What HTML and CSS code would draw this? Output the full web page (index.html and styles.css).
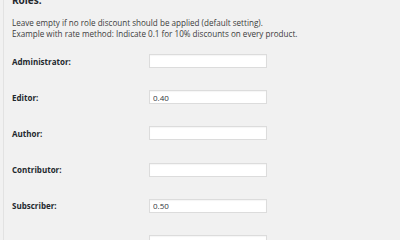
FILE: index.html
```html
<!DOCTYPE html>
<html lang="en">
<head>
    <meta charset="UTF-8">
    <title>Role Discounts</title>
    <link rel="stylesheet" href="styles.css">
</head>
<body>
    <div class="settings">
        <h3>Roles:</h3>
        <p class="description">
            Leave empty if no role discount should be applied (default setting).<br>
            Example with rate method: Indicate 0.1 for 10% discounts on every product.
        </p>

        <div class="form-table">
            <div class="row">
                <label for="role_administrator">Administrator:</label>
                <input type="text" id="role_administrator" value="">
            </div>
            <div class="row">
                <label for="role_editor">Editor:</label>
                <input type="text" id="role_editor" value="0.40">
            </div>
            <div class="row">
                <label for="role_author">Author:</label>
                <input type="text" id="role_author" value="">
            </div>
            <div class="row">
                <label for="role_contributor">Contributor:</label>
                <input type="text" id="role_contributor" value="">
            </div>
            <div class="row">
                <label for="role_subscriber">Subscriber:</label>
                <input type="text" id="role_subscriber" value="0.50">
            </div>
            <div class="row">
                <label for="role_customer">Customer:</label>
                <input type="text" id="role_customer" value="0.70">
            </div>
        </div>
    </div>
</body>
</html>
```

FILE: styles.css
```css
body {
    margin: 0;
    background-color: #f1f1f1;
    font-family: "Open Sans", Arial, sans-serif;
    color: #444;
    overflow: hidden;
}

.settings {
    margin-left: 3px;
    padding-left: 8px;
    border-left: 1px solid #e2e2e2;
    min-height: 240px;
}

h3 {
    margin: -6px 0 0;
    font-size: 10px;
    line-height: 12px;
    color: #23282d;
}

.description {
    margin: 12px 0 0;
    font-size: 8.1px;
    line-height: 10.5px;
    color: #3c3c3c;
}

.form-table {
    margin-top: 4px;
}

.row {
    display: flex;
    align-items: center;
    height: 36.2px;
}

.row label {
    width: 137px;
    font-size: 8px;
    font-weight: bold;
    color: #23282d;
}

.row input {
    width: 118px;
    height: 14px;
    box-sizing: border-box;
    padding: 0 3px;
    border: 1px solid #dcdcdc;
    border-radius: 0;
    background: #fff;
    font-family: "Open Sans", Arial, sans-serif;
    font-size: 8px;
    color: #32373c;
    box-shadow: inset 0 1px 1px rgba(0,0,0,0.04);
}
```
